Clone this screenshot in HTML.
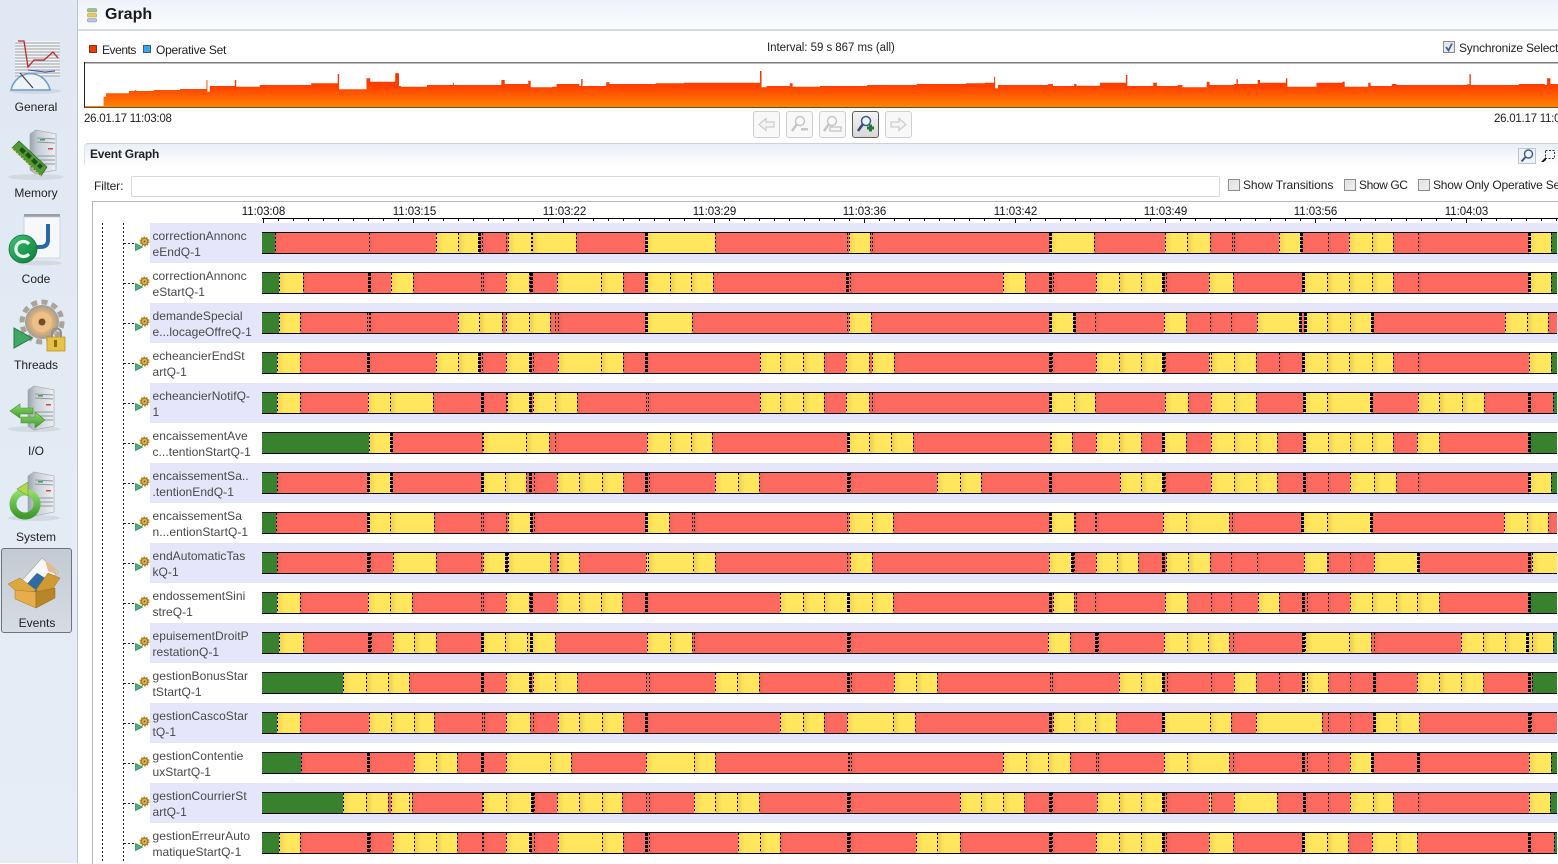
<!DOCTYPE html>
<html><head><meta charset="utf-8"><title>Graph</title>
<style>
html,body{margin:0;padding:0;width:1558px;height:863px;overflow:hidden;background:#fff;font-family:"Liberation Sans",sans-serif;font-size:12px;color:#222}
.a{position:absolute;white-space:nowrap}
#side{position:absolute;left:0;top:0;width:77px;height:863px;background:linear-gradient(180deg,#dfe8f3,#e6edf6);border-right:1px solid #b3c6da}
.sl{position:absolute;width:72px;left:0;text-align:center;line-height:14px;color:#222}
#head{position:absolute;left:78px;top:0;width:1480px;height:29px;background:linear-gradient(180deg,#eef2f8,#fbfcfe);border-bottom:2px solid #d3dae4}
.l{position:absolute;left:152.5px;width:104px;line-height:16px;color:#484848;white-space:nowrap;letter-spacing:.05px}
.t{position:absolute;top:205px;width:60px;margin-left:-29.5px;text-align:center;font-size:11.5px;line-height:14px;color:#111;letter-spacing:-.05px}
.cb{position:absolute;width:10px;height:10px;border:1px solid #8e8e8e;background:linear-gradient(135deg,#ddd,#f4f4f4);box-shadow:inset 0 0 0 1px #e8e8e8}
.btn{position:absolute;top:111px;width:25px;height:25px;border:1px solid #cfcfcf;border-radius:3px;background:#f8f8f8}
.btn svg{position:absolute;left:0;top:0}
</style></head><body>

<div id="side"></div>
<div class="a" style="left:1px;top:548px;width:69px;height:83px;border:1px solid #6d747c;border-radius:3px;background:linear-gradient(180deg,#c3cad3,#d6dce4)"></div>
<svg class="a" style="left:0;top:0" width="78" height="640" viewBox="0 0 78 640">
<defs>
<linearGradient id="srv" x1="0" x2="1" y1="0" y2="0"><stop offset="0" stop-color="#9aa3ad"/><stop offset=".3" stop-color="#c5ccd4"/><stop offset="1" stop-color="#eef1f4"/></linearGradient>
<linearGradient id="gr" x1="0" x2="0" y1="0" y2="1"><stop offset="0" stop-color="#8fdc6a"/><stop offset="1" stop-color="#3d9a2c"/></linearGradient>
<linearGradient id="gc" x1="0" x2="1" y1="0" y2="1"><stop offset="0" stop-color="#3cc46f"/><stop offset="1" stop-color="#0d7a3a"/></linearGradient>
<radialGradient id="ge"><stop offset="0" stop-color="#f7dcae"/><stop offset=".6" stop-color="#e0b27a"/><stop offset="1" stop-color="#a09c92"/></radialGradient>
<g id="server">
<path d="M0 4 L6 0 L26 4 L26 40 L6 44 L0 40Z" fill="url(#srv)" stroke="#9ba4ae" stroke-width=".6"/>
<path d="M7 8 L25 9 M7 12 L25 13 M7 26 L25 26 M7 30 L25 30 M7 34 L25 34" stroke="#8d97a2" stroke-width="1"/>
<rect x="10" y="9" width="5" height="1.5" fill="#3aa655"/><rect x="18" y="18" width="5" height="1.5" fill="#d44"/>
</g>
</defs>
<!-- General -->
<ellipse cx="35" cy="91" rx="26" ry="3" fill="#d0d7e0"/>
<rect x="15" y="41" width="45" height="36" fill="#f3f4f6"/>
<path d="M15 43H60M15 46H60M15 49H60M15 52H60M15 55H60M15 58H60M15 61H60M15 64H60M15 67H60M15 70H60M15 73H60M15 76H60" stroke="#9aa0a8" stroke-width="1"/>
<path d="M18 41H24L28 67L34 60H44L53 52L58 58" fill="none" stroke="#c2272d" stroke-width="1.3"/>
<path d="M11 90A20 21 0 0 1 50 90Z" fill="#eef3f8" stroke="#6f9cc8" stroke-width="1.5"/>
<path d="M20 73L33 88" stroke="#444" stroke-width="1.2"/><path d="M28 70L45 72L55 71" fill="none" stroke="#3a4fa8" stroke-width="1"/>
<!-- Memory -->
<ellipse cx="36" cy="177" rx="28" ry="3" fill="#d2d9e2"/>
<use href="#server" x="30" y="130"/>
<path d="M12 148 L19 141 L47 167 L41 176Z" fill="#4f9a36" stroke="#2d6b1f" stroke-width=".7"/>
<path d="M19 150l3-3 4 4-3 3zM25 155l3-3 4 4-3 3zM31 161l3-3 4 4-3 3zM37 166l3-3 3 3-3 3z" fill="#1d4f17"/>
<path d="M12 148L41 176" stroke="#d5c040" stroke-width="1.2" stroke-dasharray="2 1.5"/>
<!-- Code -->
<ellipse cx="40" cy="263" rx="22" ry="2.5" fill="#d2d9e2"/>
<rect x="24" y="214" width="36" height="4" fill="#9a9fa6"/>
<rect x="24" y="217" width="36" height="41" fill="#f6f8fb" stroke="#c3ccd6" stroke-width=".7"/>
<path d="M48 224V240Q48 247 40 247H36" fill="none" stroke="#2a68a8" stroke-width="4"/>
<circle cx="23" cy="249" r="14" fill="url(#gc)" stroke="#0f6e36" stroke-width=".8"/>
<path d="M29 244A7.5 7.5 0 1 0 29 254" fill="none" stroke="#e9f7ee" stroke-width="3.2"/>
<!-- Threads -->
<circle cx="42" cy="322" r="17" fill="url(#ge)"/>
<circle cx="42" cy="322" r="20" fill="none" stroke="#a8a49a" stroke-width="5" stroke-dasharray="6 4.4"/>
<circle cx="42" cy="322" r="10" fill="#edc08a"/><circle cx="42" cy="322" r="3.5" fill="#7a4b22"/>
<path d="M14 328L32 338L14 348Z" fill="#3fa864" stroke="#257842" stroke-width="1"/>
<path d="M52 337v-4a4.5 4.5 0 0 1 9 0v4" fill="none" stroke="#8f8f8f" stroke-width="2"/>
<rect x="47" y="337" width="18" height="14" fill="#e6c248" stroke="#b28a1f" stroke-width=".7"/><rect x="54" y="340" width="3" height="7" fill="#8a6a14"/>
<!-- IO -->
<ellipse cx="34" cy="429" rx="26" ry="3" fill="#d2d9e2"/>
<use href="#server" x="28" y="386"/>
<path d="M10 411L20 404V408H33V414H20V418Z" fill="url(#gr)" stroke="#4a8f2c" stroke-width=".6"/>
<path d="M45 420L35 428V423H21V417H35V412Z" fill="url(#gr)" stroke="#4a8f2c" stroke-width=".6"/>
<!-- System -->
<ellipse cx="34" cy="518" rx="26" ry="3" fill="#d2d9e2"/>
<use href="#server" x="28" y="472"/>
<circle cx="25" cy="504" r="12" fill="none" stroke="url(#gr)" stroke-width="7"/>
<path d="M17 489L28 482V496Z" fill="#b3d84f" stroke="#6d9e2a" stroke-width=".6"/>
<!-- Events -->
<path d="M16 587L42 558L58 572L33 596Z" fill="#f6f7fa" stroke="#9fa8b3" stroke-width=".6"/>
<path d="M24 587L37 573L50 581L36 592Z" fill="#2f6aa3"/>
<path d="M45 560L53 566L58 575L48 571Z" fill="#e6b98c"/>
<path d="M8 584L20 578L36 590L22 596Z" fill="#dfa83f" stroke="#a97a1f" stroke-width=".5"/>
<path d="M60 578L48 573L36 590L48 596Z" fill="#cf9a33" stroke="#a97a1f" stroke-width=".5"/>
<path d="M15 590L36 592V608L15 599Z" fill="#e6ad4a" stroke="#a97a1f" stroke-width=".5"/>
<path d="M36 592L55 588V598L36 608Z" fill="#b98528" stroke="#8f6a1f" stroke-width=".5"/>
</svg>
<div class="sl" style="top:100px">General</div>
<div class="sl" style="top:186px">Memory</div>
<div class="sl" style="top:272px">Code</div>
<div class="sl" style="top:358px">Threads</div>
<div class="sl" style="top:444px">I/O</div>
<div class="sl" style="top:530px">System</div>
<div class="sl" style="top:616px;left:1px">Events</div>

<div id="head"></div>
<svg class="a" style="left:87px;top:8px" width="12" height="15"><rect x=".5" y=".5" width="9" height="3.5" rx="1" fill="#9fc08d" stroke="#7b9a6b" stroke-width=".6"/><rect x=".5" y="5.5" width="9" height="3.5" rx="1" fill="#edc85c" stroke="#b99a3c" stroke-width=".6"/><rect x=".5" y="10.5" width="9" height="3.5" rx="1" fill="#b9c6d8" stroke="#8796ab" stroke-width=".6"/></svg>
<div class="a" style="left:105px;top:5px;font-size:16px;font-weight:bold;line-height:19px;color:#1a1a1a">Graph</div>

<div class="a" style="left:89px;top:45px;width:6px;height:6px;background:#f23a00;border:1px solid #7a3a22"></div>
<div class="a" style="left:102px;top:43px;line-height:14px;letter-spacing:-.45px">Events</div>
<div class="a" style="left:143px;top:45px;width:6px;height:6px;background:#36a6f0;border:1px solid #3a5f7c"></div>
<div class="a" style="left:156px;top:43px;line-height:14px;letter-spacing:-.25px">Operative Set</div>
<div class="a" style="left:767px;top:41px;line-height:14px;font-size:11.5px;letter-spacing:-.05px">Interval: 59 s 867 ms (all)</div>
<div class="cb" style="left:1443px;top:41px;background:linear-gradient(135deg,#dbe2ee,#f4f6fa)"></div>
<svg class="a" style="left:1443px;top:41px" width="12" height="12"><path d="M3 6L5.5 9.5L9 2.5" fill="none" stroke="#4b5f97" stroke-width="1.8"/></svg>
<div class="a" style="left:1459px;top:41px;line-height:14px;width:99px;overflow:hidden;letter-spacing:-.2px">Synchronize Select</div>

<div id="chart"></div>
<div class="a" style="left:84px;top:112px;line-height:14px;font-size:11.5px;letter-spacing:-.25px">26.01.17 11:03:08</div>
<div class="a" style="left:1494px;top:112px;line-height:14px;font-size:11.5px;letter-spacing:-.25px;width:64px;overflow:hidden">26.01.17 11:03:08</div>

<div class="btn" style="left:753px"><svg width="25" height="25"><path d="M5 12.5L12 6.5V10H20V15H12V18.5Z" fill="#f4f4f4" stroke="#cdcdcd" stroke-width="1.3"/></svg></div>
<div class="btn" style="left:786px"><svg width="25" height="25"><circle cx="13" cy="9" r="4.5" fill="#fafafa" stroke="#c4c4c4" stroke-width="1.4"/><path d="M10 12L5 19" stroke="#c4c4c4" stroke-width="2.4"/><rect x="14" y="16" width="7" height="2.5" fill="#c8c8c8"/></svg></div>
<div class="btn" style="left:819px"><svg width="25" height="25"><circle cx="12" cy="9" r="4.5" fill="#fafafa" stroke="#c4c4c4" stroke-width="1.4"/><path d="M9 12L4 19" stroke="#c4c4c4" stroke-width="2.4"/><rect x="10" y="15" width="11" height="4" fill="none" stroke="#c8c8c8" stroke-width="1.4"/></svg></div>
<div class="btn" style="left:852px;border-color:#5f5f5f;background:linear-gradient(180deg,#f4f4f4,#d8d8d8)"><svg width="25" height="25"><circle cx="13" cy="9" r="4.5" fill="#eaf2fb" stroke="#44598a" stroke-width="1.5"/><path d="M10 12L5 19" stroke="#3b4c78" stroke-width="2.6"/><path d="M14 16H21M17.5 12.5V19.5" stroke="#1f7a3a" stroke-width="3"/></svg></div>
<div class="btn" style="left:885px"><svg width="25" height="25"><path d="M20 12.5L13 6.5V10H5V15H13V18.5Z" fill="#f4f4f4" stroke="#cdcdcd" stroke-width="1.3"/></svg></div>

<div class="a" style="left:84px;top:143px;width:1474px;height:21px;border-top:1px solid #c9d2dd;border-left:1px solid #dfe4ea;border-radius:4px 0 0 0;background:linear-gradient(180deg,#e9eef6,#fefefe)"></div>
<div class="a" style="left:90px;top:147px;line-height:14px;font-weight:bold;color:#222;letter-spacing:-.2px">Event Graph</div>
<div class="a" style="left:1518px;top:148px;width:16px;height:14px;border:1px solid #bcc5d0;background:#eef1f5"></div>
<svg class="a" style="left:1518px;top:147px" width="18" height="18"><circle cx="10.5" cy="7" r="4" fill="none" stroke="#3d5a85" stroke-width="1.4"/><path d="M7.5 10L3.5 14.5" stroke="#3d5a85" stroke-width="2"/></svg>
<svg class="a" style="left:1539px;top:147px" width="18" height="18"><rect x="6.5" y="3.5" width="9" height="8" fill="none" stroke="#333" stroke-dasharray="2 1.5"/><path d="M2 15L7 10V13L4.5 15Z" fill="#111"/></svg>

<div class="a" style="left:94px;top:179px;line-height:14px;letter-spacing:-.1px">Filter:</div>
<div class="a" style="left:131px;top:176px;width:1087px;height:19px;border:1px solid #dadada;border-radius:2px;background:#fff"></div>
<div class="cb" style="left:1228px;top:179px"></div><div class="a" style="left:1243px;top:178px;line-height:14px;letter-spacing:-.07px">Show Transitions</div>
<div class="cb" style="left:1344px;top:179px"></div><div class="a" style="left:1359px;top:178px;line-height:14px;letter-spacing:-.4px">Show GC</div>
<div class="cb" style="left:1418px;top:179px"></div><div class="a" style="left:1433px;top:178px;line-height:14px;width:125px;overflow:hidden;letter-spacing:-.2px">Show Only Operative Set</div>

<div class="a" style="left:92px;top:201px;width:1466px;height:662px;border-left:1px solid #b8b8b8;border-top:1px solid #b8b8b8"></div>
<div class="t" style="left:263px">11:03:08</div>
<div class="t" style="left:414px">11:03:15</div>
<div class="t" style="left:564px">11:03:22</div>
<div class="t" style="left:714px">11:03:29</div>
<div class="t" style="left:864px">11:03:36</div>
<div class="t" style="left:1015px">11:03:42</div>
<div class="t" style="left:1165px">11:03:49</div>
<div class="t" style="left:1315px">11:03:56</div>
<div class="t" style="left:1466px">11:04:03</div>

<div id="rows"></div>

<div class="l" style="top:228px">correctionAnnonc<br>eEndQ-1</div>
<div class="l" style="top:268px">correctionAnnonc<br>eStartQ-1</div>
<div class="l" style="top:308px">demandeSpecial<br>e...locageOffreQ-1</div>
<div class="l" style="top:348px">echeancierEndSt<br>artQ-1</div>
<div class="l" style="top:388px">echeancierNotifQ-<br>1</div>
<div class="l" style="top:428px">encaissementAve<br>c...tentionStartQ-1</div>
<div class="l" style="top:468px">encaissementSa..<br>.tentionEndQ-1</div>
<div class="l" style="top:508px">encaissementSa<br>n...entionStartQ-1</div>
<div class="l" style="top:548px">endAutomaticTas<br>kQ-1</div>
<div class="l" style="top:588px">endossementSini<br>streQ-1</div>
<div class="l" style="top:628px">epuisementDroitP<br>restationQ-1</div>
<div class="l" style="top:668px">gestionBonusStar<br>tStartQ-1</div>
<div class="l" style="top:708px">gestionCascoStar<br>tQ-1</div>
<div class="l" style="top:748px">gestionContentie<br>uxStartQ-1</div>
<div class="l" style="top:788px">gestionCourrierSt<br>artQ-1</div>
<div class="l" style="top:828px">gestionErreurAuto<br>matiqueStartQ-1</div>

<script>
(function(){
var data=[
["5g 36r 259r 418y 471y 521r! 528r 584r 590y 643y 647y 752r 918y! 1080r 1395r 1399y 1450r 1453r","340y! 446r 617y 670y 725r 779r 784r 893y 947r! 1012r 1063y 1118y 1170r 1229r 1497y! 1552g"],
["5g 46y 101r 258r! 312y 364r 525r 531r 585y 638r 645r! 706y 810y 862r 918y! 973y 1025y 1077r 1395r! 1401r","226y 279r 338r! 345r 451y 505y 559y 612r! 620r 723y 781r 950y! 1010y 1063y 1118y 1170r 1229r 1498y! 1552g"],
["5g 44y 96r 254r 258r 262r 471y 521y 574r 585y 638y 690r 702r 707r 918y! 1026r 1395r 1400y 1452r","340y! 396r! 447r 615y 669r 725r 778r 839y 943r! 955y! 1010y 1064y 1118r! 1441y 1492y 1545r"],
["5g 41y 96r 257r! 419y 471y 521r! 528r 585y 641r! 648r 707y 810y 862r 918r! 1187y 1236y 1289y 1341r 1393y 1446r 1455y 1507r","338r! 344r 451y 505y 559y 612r! 618r 723y 729y 784y 838r 894r 950y! 1008y 1063y 1118y 1170r 1229r 1498y 1552g"],
["5g 41y 96r 256y 310y 412r 527r! 584r 588y 641r! 648y 702y 754r 918r 921r 1187y 1236y 1289y 1341r 1393y 1446r 1453r","340y! 396y 447r 617y 672r 729y 784y 838r 954y! 1010y 1115r! 1230y 1281y 1335y 1388r 1498r! 1556g"],
["5g 258y 311r! 528r 531y 633y 686r 702r 920y 973y 1023y 1075r 1396y! 1448y 1500y","8r 338r 341y 393r 450y 505y 558r 612y! 669r 729y 784y 837y 888r 953y! 1012y 1064y 1118y 1170r 1226y 1279r 1498g!"],
["5g 41r 256r! 259y 311r! 528y! 581y 633r 642r! 652r 705y 759y 812y 863r 918r! 925r 1082y 1135y 1185r 1397r! 1403r","66y 120y 172r 338r! 342r 507y 559y 612r! 618r 729y 784y 837y 888r 953r! 1012r 1066y 1122y 1175r 1229r 1498y! 1552g"],
["5g 38r 256y! 310y 414r 524r 531r 585r 590y 643r! 650r 918y! 972r 1026r 1031r 1395r 1400y 1455y 1505r","340y! 396r 400r 447r 450r 613y 669y 773r 780r 948y! 1010y 1116r! 1438y 1492y 1545r"],
["5g 41r 256r! 262r 315y 419r 525r 530y 585r! 590y 690r 705r 707y 759r 918y 922y 1028y 1080r 1395r 1401y 1455r","337y 392r! 398r 449y 501y 552r 612r! 619y 672y 725r 778r 839r 953y 1008r 1012r 1066r 1122y 1229r! 1498r! 1505y"],
["5g 41y 94r 256y 310y 362r 525r 531r 585y 638r 645r! 706y 759y 810y 860r 918r! 1236y 1289y 1341y 1396y! 1453y 1505r","338r! 345y 397r 402r 447r 617y 671r 729r 776r 841y 893r 950r! 960r 1012r 1064y 1118y 1176y 1226y 1279r 1498g!"],
["5g 46y 101r 258r! 264r 315y 367y 417r 527y! 581y 635y 643y! 700r 920y 973y 1026r 1031r 1397r! 1403r","333y 386r 451r! 456r 615y 670y 720y 773r 782r 950y! 957y 1062y 1115r 1122r 1334y 1386y 1440y 1492y! 1505y 1557g"],
["5g 198y 251y 304y 355r 527r! 585y 641r! 648y 702y 754r 918r 925r 1082y 1133y 1185r 1397r! 1405r 1507y","15y 66r 338r 343r 505y 559y 612r! 622r 729r 783y 838r 894r 950y! 960y 1012r 1066r 1122r! 1227y 1281y 1333y 1386r 1498r! 1505g"],
["5g 41y 96r 258y 312y 365y 414r 528r 533r 585y 641r 648r 707y 759y 812y 863r 918r! 1236y 1289y 1341r 1395y 1505y","13r 338r! 345y 396y 447y 499r 612y! 727y 778r 837y 998r 1012r 1066r 1122y! 1177y 1231r 1498r! 1503r"],
["5g 98r 256r! 367y 417y 469r 527r! 585y 690y 740r 918y 1030y 1080r 1396r 1400r 1405r","226y 280y 333y 386r 451r 456r 615y 670y 773r 782r 950r! 960r 1012r 1066y 1118r! 1229r! 1498y 1552g"],
["5g 198y 251y 304r 312y 355y 362r 527r 531y 585y 647r! 652r 705y 759y 812y 860r 918r 925r 1030y 1082y 1133y 1185r 1397r! 1403r","120y 173y 226y 277r 338r! 343r 453y 505y 559y 612r! 620r 723y 729r 783y 888r 953r! 1012r 1066y 1120y 1170r 1229r 1498y 1549g"],
["5g 44y 96r 256r! 262r 315y 367y 417y 469r 527r 531r 585y 641r! 650r 707y 812y 863r 918r! 925r 1135y 1187y 1236r 1397r! 1403r","15y 66y 120r 338r! 344r 451y 505y 559y 612r! 620r 723y 781r 950y! 1008y 1061r 1118y 1176y 1226r 1498r! 1558g"]
];
var col={r:"#ff6a60",y:"#ffe65c",g:"#38822f"};
var h="";
// ruler
h+='<div class="a" style="left:262px;top:218px;width:1296px;height:1px;background:#000"></div>';
for(var t=0;t<87;t++){var tx=Math.round(262.5+t*15.04);if(tx>1557)break;var maj=t%10==0;
 h+='<div class="a" style="left:'+tx+'px;top:219px;width:1px;height:'+(maj?4:2)+'px;background:#111"></div>';}
// tree
var dash='repeating-linear-gradient(180deg,#222 0,#222 2px,transparent 2px,transparent 4px)';
h+='<div class="a" style="left:102px;top:223px;width:1px;height:640px;background:'+dash+'"></div>';
h+='<div class="a" style="left:123px;top:223px;width:1px;height:640px;background:'+dash+'"></div>';
data.forEach(function(d,i){
 var y=232+40*i;
 if(i%2==0)h+='<div class="a" style="left:150px;top:'+(y-9)+'px;width:1408px;height:40px;background:#e6e6fa"></div>';
 h+='<div class="a" style="left:124px;top:'+(y+11)+'px;width:11px;height:1px;background:repeating-linear-gradient(90deg,#222 0,#222 2px,transparent 2px,transparent 4px)"></div>';
 h+='<svg class="a" style="left:134px;top:'+(y+3)+'px" width="17" height="17"><path d="M1.5 8.5L8.5 12L1.5 15.5Z" fill="#4fb37a" stroke="#2f8a55" stroke-width=".7"/><circle cx="10.5" cy="6.5" r="3.2" fill="#e9c46a" stroke="#a87d1f" stroke-width="1.6"/><circle cx="10.5" cy="6.5" r="4.4" fill="none" stroke="#b98a26" stroke-width="1.3" stroke-dasharray="1.6 1.2"/><circle cx="10.5" cy="6.5" r="1.1" fill="#7a5a12"/></svg>';
 var toks=[];
 d[0].split(" ").forEach(function(s){var p=parseFloat(s);if(p<1544)toks.push({x:Math.round(260+p/2.376),c:s.replace(/[0-9!]/g,""),th:s.indexOf("!")>=0});});
 d[1].split(" ").forEach(function(s){var p=parseFloat(s);toks.push({x:Math.round(910+p/2.42),c:s.replace(/[0-9!]/g,""),th:s.indexOf("!")>=0});});
 h+='<div class="a" style="left:262px;top:'+y+'px;width:1295px;height:22px;overflow:hidden;background:#000">';
 var dh="";
 toks.forEach(function(k,j){
  var x=k.x, nx=j+1<toks.length?toks[j+1].x:1557, c=col[k.c], prev=j?toks[j-1].c:"g", bg=c;
  if(k.c=="r")bg='linear-gradient(90deg,'+(prev=="y"?"#e46a54":"#ee6156")+' 0,'+c+' 6px)';
  if(k.c=="y")bg='linear-gradient(90deg,'+(prev=="y"?"#edc84e":"#f2cf52")+' 0,'+c+' 7px)';
  if(j==0)x=262;
  h+='<div class="a" style="left:'+(x-262)+'px;top:1px;width:'+(nx-x)+'px;height:20px;background:'+bg+'"></div>';
  if(j>0){var w=k.th?3:1,dd=k.th?'#000 0,#000 3px,transparent 3px,transparent 4px':'#000 0,#000 2px,transparent 2px,transparent 4px';
   dh+='<div class="a" style="left:'+(x-262-(k.th?1:0))+'px;top:1px;width:'+w+'px;height:20px;background:repeating-linear-gradient(180deg,'+dd+')"></div>';}
 });
 h+=dh+'</div>';
});
document.getElementById("rows").innerHTML=h;

// overview chart
var a=[[12,138],[45,138],[50,110],[55,100],[102,100],[104,93],[116,90],[119,93],[155,93],[156,90],[210,90],[212,87],[268,87],[268,60],[270,95],[275,78],[318,78],[328,60],[331,80],[378,80],[381,75],[432,75],[435,75],[488,75],[490,70],[546,70],[546,42],[549,88],[603,88],[607,55],[615,65],[660,65],[668,40],[676,78],[680,80],[730,80],[735,75],[788,75],[790,68],[792,75],[890,75],[893,60],[900,72],[948,72],[950,62],[955,82],[1000,80],[1010,72],[1058,78],[1062,57],[1065,78],[1110,78],[1115,67],[1122,72],[1220,70],[1280,68],[1438,68],[1441,33],[1444,82],[1455,78],[1500,78],[1504,70],[1510,80],[1544,80]];
var b=[[0,78],[30,78],[100,75],[205,72],[310,70],[350,68],[370,68],[370,50],[372,85],[378,75],[485,72],[495,78],[540,72],[545,77],[595,68],[650,68],[650,45],[653,78],[705,78],[708,68],[716,78],[760,75],[770,82],[810,82],[822,65],[828,75],[880,72],[885,58],[888,72],[930,72],[930,60],[935,68],[985,68],[990,55],[993,80],[1040,80],[1055,68],[1100,68],[1110,65],[1115,80],[1150,80],[1165,68],[1170,78],[1215,72],[1225,75],[1375,73],[1380,43],[1383,75],[1485,72],[1540,75],[1545,55],[1552,72],[1568,75]];
var p=[[85,106]],last=106;
function add(x,y){p.push([x.toFixed(1),last.toFixed(1)]);p.push([x.toFixed(1),y.toFixed(1)]);last=y;}
a.forEach(function(q){add(80+q[0]/2.119,60+q[1]/3);});
b.forEach(function(q){add(820+q[0]/2.125,60+q[1]/3);});
p.push([1558,last],[1558,107],[85,107]);
var pts=p.map(function(q){return q.join(",");}).join(" ");
document.getElementById("chart").innerHTML='<svg class="a" style="left:84px;top:62px" width="1474" height="47" viewBox="84 62 1474 47"><defs><linearGradient id="ar" gradientUnits="userSpaceOnUse" x1="0" x2="0" y1="72" y2="107"><stop offset="0" stop-color="#f53000"/><stop offset=".42" stop-color="#ff4000"/><stop offset="1" stop-color="#ff8500"/></linearGradient></defs><polygon points="'+pts+'" fill="url(#ar)"/><rect x="84" y="62" width="1474" height="1.5" fill="#7d7d7d"/><rect x="84" y="62" width="1" height="46" fill="#222"/><rect x="84" y="107" width="1474" height="1" fill="#6d4a30"/></svg>';
})();
</script>
</body></html>
